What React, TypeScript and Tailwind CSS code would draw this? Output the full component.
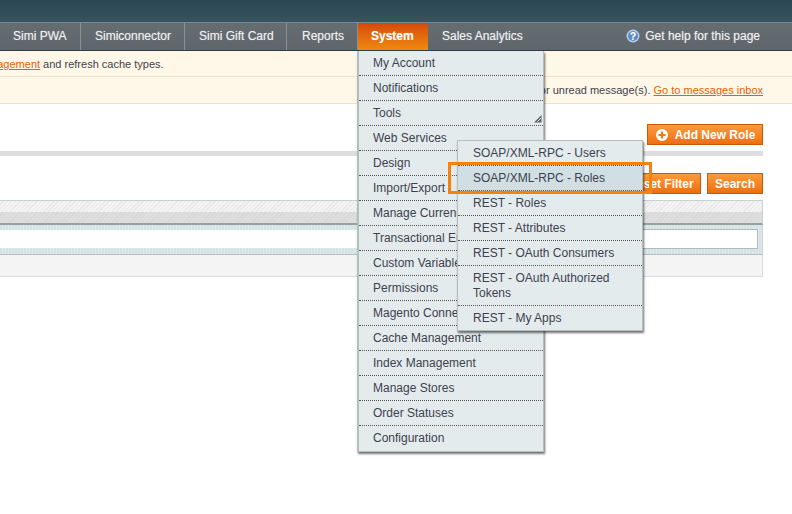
import React from 'react';

const navLeft = [
  { label: 'Simi PWA', width: 'w-[81px]', pad: 'pl-[13px]' },
  { label: 'Simiconnector', width: 'w-[104px]', pad: 'pl-[14px]' },
  { label: 'Simi Gift Card', width: 'w-[102px]', pad: 'pl-[14px]' },
  { label: 'Reports', width: 'w-[71px]', pad: 'pl-[15px]' },
];

const systemItems = [
  'My Account', 'Notifications', 'Tools', 'Web Services', 'Design', 'Import/Export', 'Manage Currency',
  'Transactional Emails', 'Custom Variables', 'Permissions', 'Magento Connect', 'Cache Management',
  'Index Management', 'Manage Stores', 'Order Statuses', 'Configuration',
];

const serviceItems = [
  'SOAP/XML-RPC - Users', 'SOAP/XML-RPC - Roles', 'REST - Roles', 'REST - Attributes',
  'REST - OAuth Consumers', 'REST - OAuth Authorized Tokens', 'REST - My Apps',
];

const HelpIcon = () => (
  <svg width="14" height="14" viewBox="0 0 14 14" className="mr-[5px]">
    <circle cx="7" cy="7" r="6.5" fill="#b4d0ec" />
    <circle cx="7" cy="7" r="5" fill="#5a8cc2" />
    <text x="7" y="10.5" textAnchor="middle" fontSize="10" fontWeight="700" fill="#fff" fontFamily="Liberation Sans">?</text>
  </svg>
);

const PlusIcon = () => (
  <svg width="14" height="14" viewBox="0 0 14 14" className="mr-[6px]">
    <circle cx="7" cy="7" r="6" fill="#fff" />
    <path d="M7 3.5v7M3.5 7h7" stroke="#ee7a14" strokeWidth="2.2" />
  </svg>
);

const OrangeButton = ({ className, children }: { className: string; children: React.ReactNode }) => (
  <button className={`flex h-[21px] items-center justify-center border border-[#c85a08] bg-gradient-to-b from-[#fb9a3c] to-[#ee6f08] text-[12px] font-bold text-white ${className}`}>
    {children}
  </button>
);

const ServicesMenu = () => (
  <ul className="absolute left-[98px] top-[14px] z-20 w-[186px] border border-[#b5bdbd] bg-[#e3ebed] shadow-[1px_2px_2px_rgba(0,0,0,0.55)]">
    {serviceItems.map((item, i) => (
      <li
        key={item}
        className={`relative px-[15px] pb-[4px] pt-[5px] leading-[15px] ${i === 1 ? 'bg-[#d0dfe3]' : ''} ${i < serviceItems.length - 1 ? 'border-b border-dotted border-[#555]' : ''}`}
      >
        {item}
        {i === 1 && <span className="absolute inset-x-[-10px] bottom-[-4px] top-[-4px] border-[3px] border-[#f5820f]" />}
      </li>
    ))}
  </ul>
);

const SystemMenu = () => (
  <ul className="absolute left-[-1px] top-[28px] z-10 w-[187px] border-l-2 border-r border-b border-[#b5bdbd] bg-[#e3ebed] text-[12px] text-[#3f3f4d] shadow-[1px_2px_2px_rgba(0,0,0,0.55)] font-normal [text-shadow:none]">
    {systemItems.map((item, i) => (
      <li
        key={item}
        className={`relative h-[25px] pl-[14px] pt-[5px] leading-[15px] ${i < systemItems.length - 1 ? 'border-b border-dotted border-[#555]' : ''}`}
      >
        {item}
        {item === 'Tools' && (
          <svg width="9" height="9" viewBox="0 0 9 9" className="absolute bottom-[2px] right-[1px]">
            <path d="M8.5 1 1 8.5h7.5z" fill="#5c6468" />
            <path d="M8 4 4.5 7.5" stroke="#e3ebed" strokeWidth="1" />
          </svg>
        )}
        {item === 'Web Services' && <ServicesMenu />}
      </li>
    ))}
  </ul>
);

export default function App() {
  return (
    <div className="h-[514px] w-[792px] overflow-hidden bg-white font-['Liberation_Sans',Arial,sans-serif] text-[12px] text-[#3f3f4d]">
      <div className="h-[22px] bg-gradient-to-b from-[#2a4753] to-[#36535e]" />
      <nav className="flex h-[29px] border-t border-t-[#6f8a92] border-b border-b-[#2f3f48] bg-gradient-to-b from-[#656c72] to-[#5f666b] text-[#f0f0f0] [text-shadow:0_0_1px_rgba(255,255,255,0.45)]">
        {navLeft.map(n => (
          <div key={n.label} className={`flex h-full items-center border-r border-[#8a9094] pb-[1px] ${n.width} ${n.pad}`}>
            {n.label}
          </div>
        ))}
        <div className="relative flex h-full w-[70px] items-center bg-gradient-to-b from-[#d4480a] to-[#f0890f] pb-[1px] pl-[13px] font-bold text-white">
          System
          <SystemMenu />
        </div>
        <div className="flex h-full items-center pb-[1px] pl-[14px]">Sales Analytics</div>
        <div className="ml-auto flex h-full items-center pb-[1px] pr-[32px]">
          <HelpIcon />
          Get help for this page
        </div>
      </nav>
      <div className="h-[26px] overflow-hidden whitespace-nowrap border-b border-[#efe3c6] bg-[#fff8e8] pt-[6px] text-[11px] leading-[15px]">
        <span className="ml-[-59px]">
          <a className="text-[#eb5e00] underline">Cache Management</a> and refresh cache types.
        </span>
      </div>
      <div className="h-[27px] whitespace-nowrap border-b border-[#efe3c6] bg-[#fff8e8] pr-[29px] pt-[6px] text-right text-[11px] leading-[15px]">
        You have 1 minor unread message(s). <a className="text-[#eb5e00] underline">Go to messages inbox</a>
      </div>
      <main className="pr-[29px]">
        <div className="flex h-[47px] items-end justify-end pb-[6px]">
          <OrangeButton className="w-[116px]">
            <PlusIcon />
            Add New Role
          </OrangeButton>
        </div>
        <div className="h-[5px] bg-[#dddddd]" />
        <div className="flex h-[44px] items-start justify-end gap-[6px] pt-[17px]">
          <OrangeButton className="w-[80px]">Reset Filter</OrangeButton>
          <OrangeButton className="w-[56px]">Search</OrangeButton>
        </div>
        <div className="h-[12px] border-t border-r border-[#c8d0d0] bg-[repeating-linear-gradient(135deg,#f3f3f3_0,#f3f3f3_2px,#e9e9e9_2px,#e9e9e9_3px)]" />
        <div className="h-[13px] border-b-2 border-r border-r-[#c8d0d0] border-b-[#9a9f9f] bg-[repeating-linear-gradient(135deg,#dedede_0,#dedede_2px,#d8d8d8_2px,#d8d8d8_3px)]" />
        <div className="flex h-[30px] items-start border-b border-r border-b-[#b8c0c0] border-r-[#c8d0d0] bg-[repeating-linear-gradient(90deg,#d2e2e5_0,#d2e2e5_2px,#dfeaec_2px,#dfeaec_3px)] pr-[4px]">
          <div className="mt-[5px] h-[18px] w-[450px] bg-white" />
          <div className="mt-[4px] h-[20px] flex-1 border-y border-r border-[#b4b8b8] bg-white" />
        </div>
        <div className="h-[22px] border-b border-r border-[#d8dddd] bg-[#f4f4f4]" />
      </main>
    </div>
  );
}
